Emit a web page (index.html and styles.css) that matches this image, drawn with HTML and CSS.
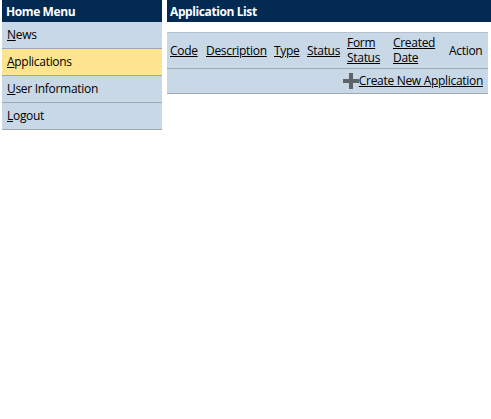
FILE: index.html
```html
<!DOCTYPE html>
<html lang="en">
<head>
    <meta charset="UTF-8">
    <meta name="viewport" content="width=device-width, initial-scale=1.0">
    <title>Application List</title>
    <link rel="stylesheet" href="styles.css">
</head>
<body>
    <div class="page">
        <div class="sidebar">
            <div class="panel-title">Home Menu</div>
            <ul class="menu">
                <li><a href="#"><u>N</u>ews</a></li>
                <li class="active"><a href="#"><u>A</u>pplications</a></li>
                <li><a href="#"><u>U</u>ser Information</a></li>
                <li><a href="#"><u>L</u>ogout</a></li>
            </ul>
        </div>

        <div class="main">
            <div class="panel-title">Application List</div>
            <table class="grid">
                <thead>
                    <tr>
                        <th class="c-code"><a href="#">Code</a></th>
                        <th class="c-desc"><a href="#">Description</a></th>
                        <th class="c-type"><a href="#">Type</a></th>
                        <th class="c-status"><a href="#">Status</a></th>
                        <th class="c-form"><a href="#">Form Status</a></th>
                        <th class="c-date"><a href="#">Created Date</a></th>
                        <th class="c-action">Action</th>
                    </tr>
                </thead>
                <tbody>
                    <tr>
                        <td colspan="7" class="new-row">
                            <a href="#" class="new-link">
                                <svg class="plus" width="16" height="16" viewBox="0 0 16 16">
                                    <path d="M6 0h4v6h6v4h-6v6h-4v-6h-6v-4h6z" fill="#5f6468"/>
                                </svg>Create New Application
                            </a>
                        </td>
                    </tr>
                </tbody>
            </table>
        </div>
    </div>
</body>
</html>
```

FILE: styles.css
```css
body {
    margin: 0;
    padding: 0 0 0 2px;
    background: #fff;
    font-family: "Open Sans", "Noto Sans", sans-serif;
    font-size: 12px;
    letter-spacing: -0.3px;
    color: #000;
}
a {
    color: #000;
}
.page {
    display: flex;
    gap: 5px;
}
.sidebar {
    width: 160px;
    flex-shrink: 0;
}
.main {
    flex: 1;
}
.panel-title {
    height: 22px;
    box-sizing: border-box;
    padding: 2px 0 0 4px;
    line-height: 20px;
    background: #022a52;
    color: #fff;
    font-weight: bold;
    font-size: 12px;
    letter-spacing: -0.4px;
}
.main .panel-title {
    padding-left: 3px;
}
.menu {
    list-style: none;
    margin: 0;
    padding: 0;
}
.menu li {
    height: 26px;
    line-height: 26px;
    background: #c9d8e7;
    border-bottom: 1px solid #9ea8b3;
}
.menu li.active {
    background: #fde590;
}
.menu a {
    display: block;
    padding-left: 5px;
    text-decoration: none;
}
.grid {
    width: 321px;
    margin-top: 10px;
    border-collapse: collapse;
    table-layout: fixed;
    background: #c9d8e7;
    border-top: 1px solid #b5c0cc;
}
.grid th {
    font-weight: normal;
    text-align: left;
    padding: 2px 2px 3px 3px;
    line-height: 15px;
    border-bottom: 1px solid #9ea8b3;
}
.c-code { width: 31px; }
.c-desc { width: 63px; }
.c-type { width: 28px; }
.c-status { width: 35px; }
.c-form { width: 41px; }
.c-date { width: 51px; }
.c-action { width: 37px; }
.grid td {
    height: 16px;
    padding: 4px 5px 4px 3px;
    line-height: 16px;
    border-bottom: 1px solid #9ea8b3;
}
.new-row {
    text-align: right;
}
.new-link {
    display: inline-flex;
    align-items: center;
    vertical-align: top;
    height: 16px;
}
.plus {
    display: block;
}
```
